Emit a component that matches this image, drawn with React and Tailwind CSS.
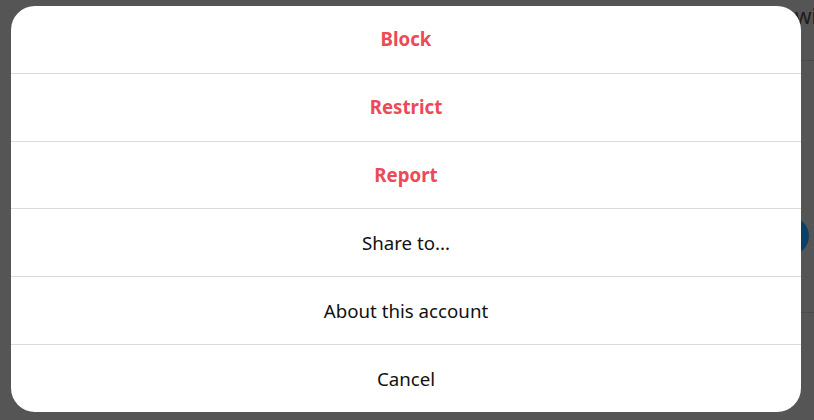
import React from 'react';

const items = [
  { label: 'Block', danger: true },
  { label: 'Restrict', danger: true },
  { label: 'Report', danger: true },
  { label: 'Share to...' },
  { label: 'About this account' },
  { label: 'Cancel' },
];

export default function App() {
  return (
    <div className="relative w-[814px] h-[420px] overflow-hidden bg-[#555555]" style={{ fontFamily: '"Noto Sans", "Open Sans", sans-serif' }}>
      {/* page behind the dim layer */}
      <div className="flex h-full">
        <div className="flex-1" />
        <div className="w-[13px] flex flex-col">
          <div className="h-[61px] border-b border-[#4a4a4a] pt-[3px] -ml-[6px] text-[21px] leading-[26px] text-[#1c1c1c] whitespace-nowrap">wi</div>
          <div className="h-[252px] border-b border-[#4a4a4a] pt-[156px]">
            <div className="w-[38px] h-[38px] rounded-full bg-[#0b3f66] -ml-[30px]" />
          </div>
        </div>
      </div>

      <div className="absolute left-[11px] top-[6px] w-[790px] h-[406px] bg-white rounded-[24px] overflow-hidden flex flex-col">
        {items.map((item, i) => (
          <button
            key={item.label}
            className={`flex-1 flex items-center justify-center text-[18.7px] ${i > 0 ? 'border-t border-[#dbdbdb]' : ''} ${item.danger ? 'font-bold text-[#ed4956]' : 'text-[#111111]'}`}
          >
            {item.label}
          </button>
        ))}
      </div>
    </div>
  );
}
